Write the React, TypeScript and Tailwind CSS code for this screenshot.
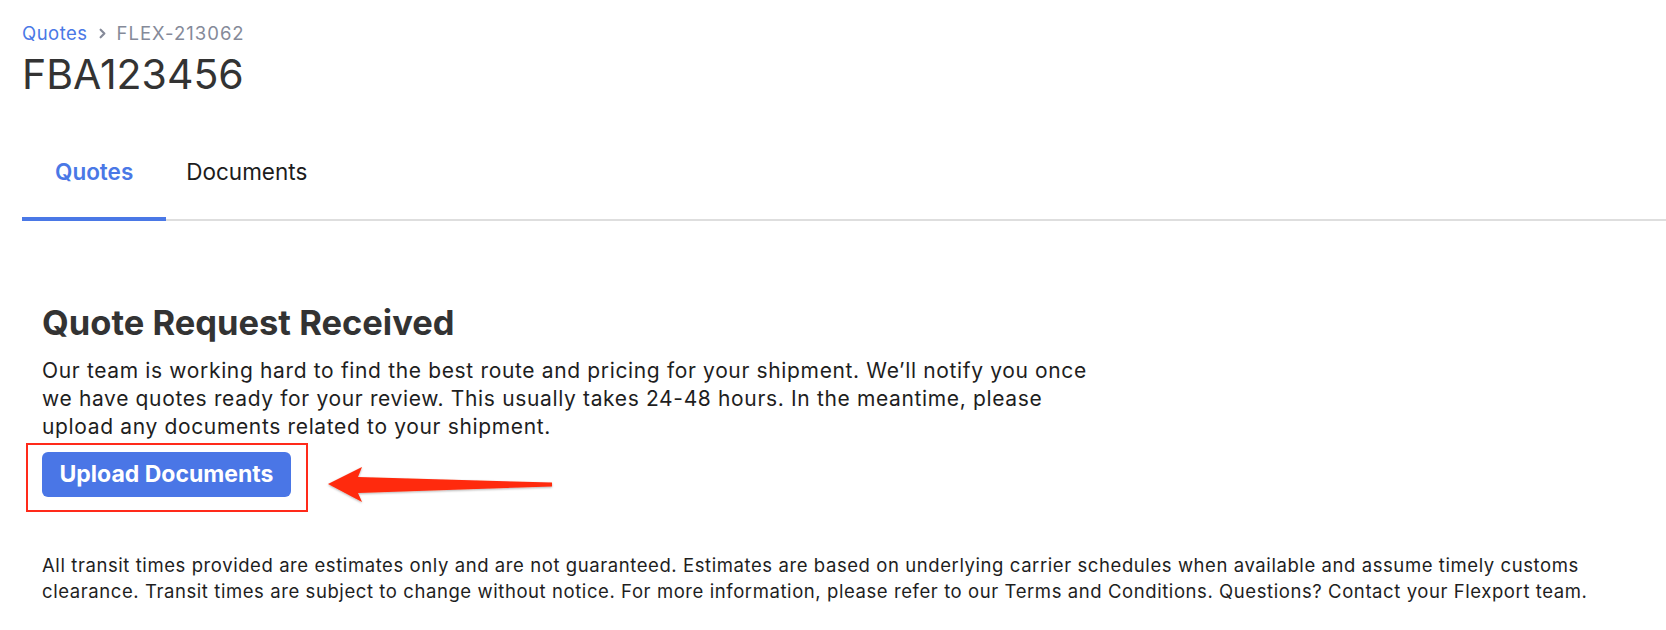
import { ChevronRight } from 'lucide-react'

function Arrow() {
  return (
    <svg width="234" height="46" viewBox="0 0 234 46" className="absolute left-[322px] top-[462px]">
      <defs>
        <filter id="arrow-shadow" x="-10%" y="-30%" width="120%" height="160%">
          <feDropShadow dx="0" dy="1" stdDeviation="1" floodColor="#000" floodOpacity="0.3" />
        </filter>
      </defs>
      <path
        d="M6 22 L40 5 L36 15 L230 20.5 L230 24.5 L36 31 L40 40 Z"
        fill="#ff2a0c"
        strokeLinejoin="round"
        filter="url(#arrow-shadow)"
      />
    </svg>
  )
}

export default function App() {
  return (
    <div className="relative min-h-[630px] bg-white font-['Inter',sans-serif] text-[#333]">
      <div className="pl-[22px] pt-[20px]">
        <div className="flex items-center gap-[7px] text-[18.5px] leading-[26px]">
          <span className="tracking-[0.5px] text-[#4a78e6]">Quotes</span>
          <ChevronRight size={15} strokeWidth={3.5} className="text-[#858a99]" />
          <span className="tracking-[1px] text-[#858a99]">FLEX-213062</span>
        </div>
        <h1 className="mt-[4px] text-[41px] leading-[48px] text-[#333]">FBA123456</h1>
      </div>

      <div className="ml-[22px] mt-[40px] flex border-b-[2px] border-[#dedede]">
        <div className="-mb-[2px] border-b-[4px] border-[#4a78e6] px-[33px] pb-[31px] pt-[20px] text-[22.5px] font-semibold leading-[28px] text-[#4a78e6]">
          Quotes
        </div>
        <div className="px-[20px] pb-[31px] pt-[20px] text-[22.5px] leading-[28px] text-[#1c1c1c]">Documents</div>
      </div>

      <div className="pl-[42px] pt-[82px]">
        <h2 className="text-[34.5px] font-bold leading-[40px] text-[#333]">Quote Request Received</h2>
        <p className="mt-[14px] max-w-[1065px] text-[21px] leading-[28px] tracking-[0.65px] text-[#1e1e1e]">
          Our team is working hard to find the best route and pricing for your shipment. We’ll notify you once
          we have quotes ready for your review. This usually takes 24-48 hours. In the meantime, please upload
          any documents related to your shipment.
        </p>
        <button className="mt-[11px] h-[45px] w-[249px] rounded-[6px] bg-[#4a76e6] text-[23px] font-bold text-white">
          Upload Documents
        </button>
        <p className="mt-[55px] max-w-[1580px] text-[18.5px] leading-[26px] tracking-[0.58px] text-[#1e1e1e]">
          All transit times provided are estimates only and are not guaranteed. Estimates are based on underlying
          carrier schedules when available and assume timely customs clearance. Transit times are subject to change
          without notice. For more information, please refer to our Terms and Conditions. Questions? Contact your
          Flexport team.
        </p>
      </div>

      <div className="absolute left-[26px] top-[443px] h-[69px] w-[282px] border-[2px] border-[#ff2a1a]" />
      <Arrow />
    </div>
  )
}
